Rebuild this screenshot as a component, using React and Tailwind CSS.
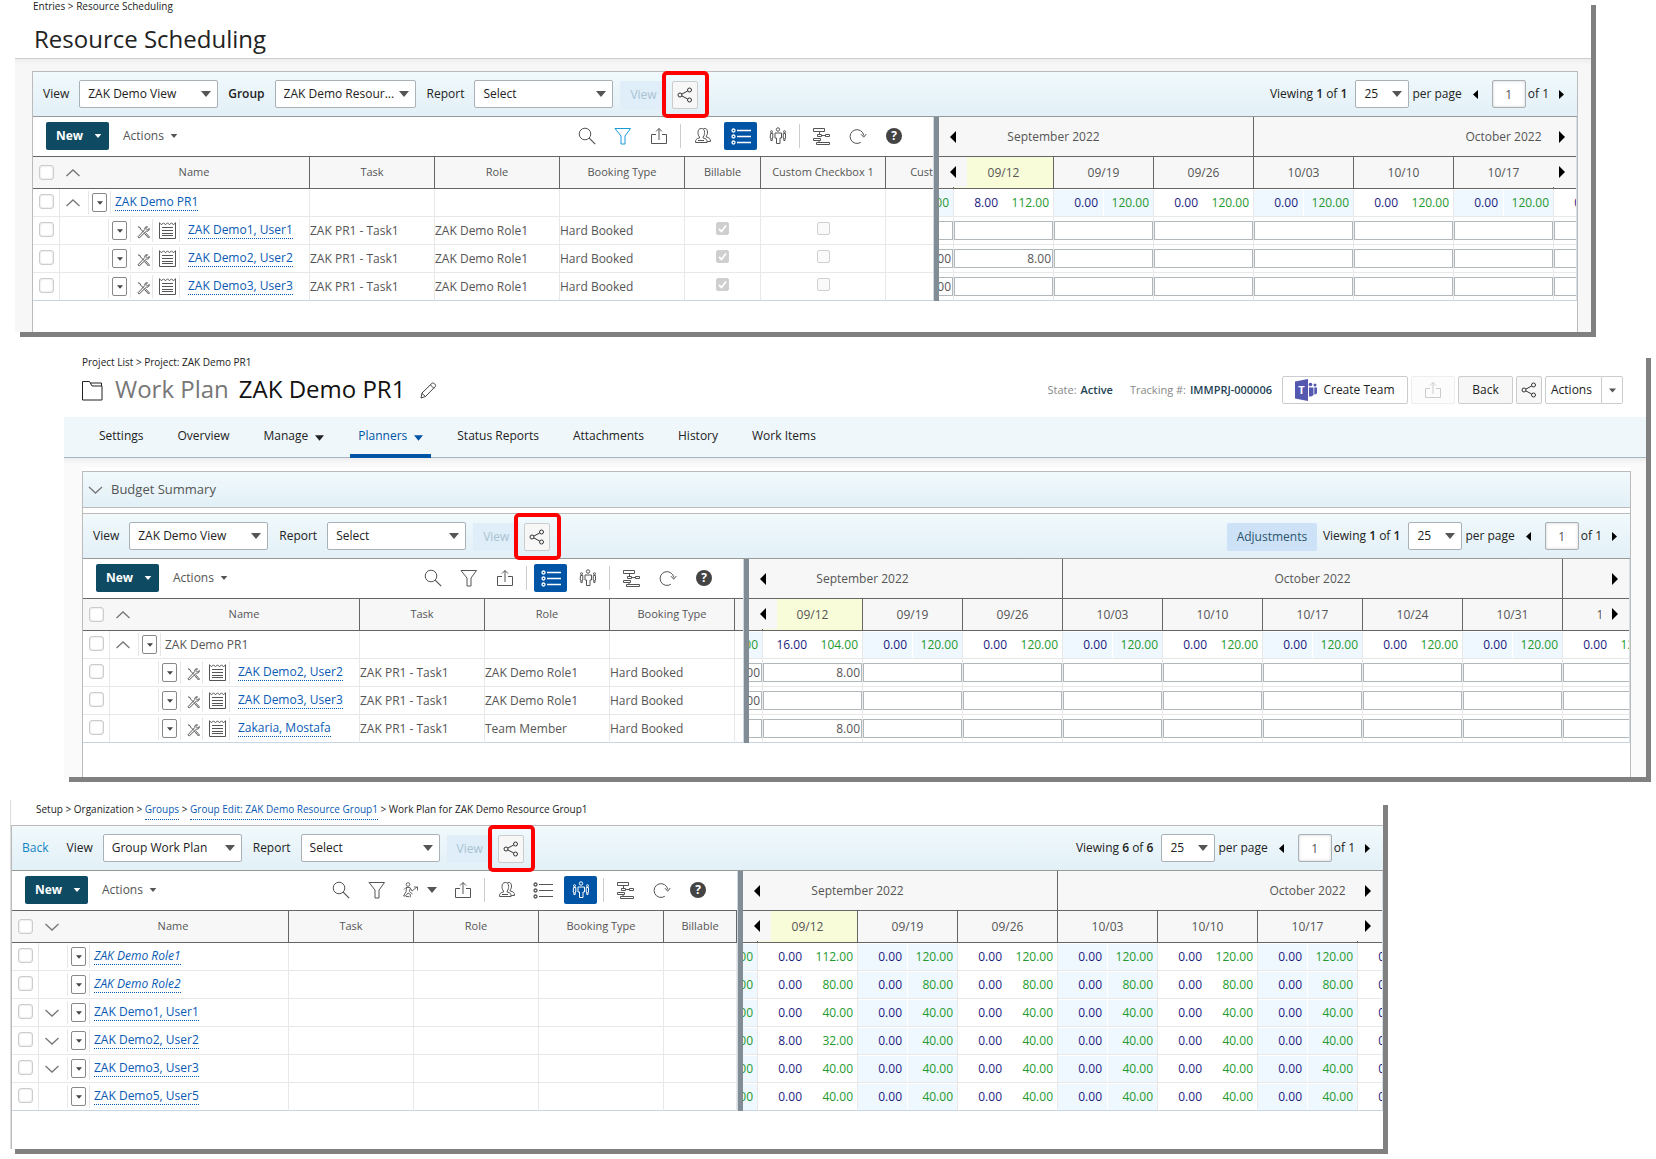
import React from "react";

const FONT = "font-['Open_Sans','Noto_Sans',sans-serif]";

/* ---------- icons ---------- */

function Caret({ className = "w-2.5 h-1.5 text-[#555]" }) {
  return (
    <svg viewBox="0 0 10 6" className={className} fill="currentColor" aria-hidden="true">
      <path d="M0 0H10L5 6Z" />
    </svg>
  );
}

function Arrow({ left = false, className = "w-[6px] h-[12px]" }) {
  return (
    <svg viewBox="0 0 6 12" className={className} fill="#000" preserveAspectRatio="none" aria-hidden="true">
      {left ? <path d="M6 0V12L0 6Z" /> : <path d="M0 0V12L6 6Z" />}
    </svg>
  );
}

function Chevron({ up = false, className = "w-[14px] h-[8px]" }) {
  return (
    <svg viewBox="0 0 14 8" className={className} fill="none" stroke="#777" strokeWidth="1.3" aria-hidden="true">
      {up ? <path d="M.5 7 7 1l6.5 6" /> : <path d="M.5 1 7 7l6.5-6" />}
    </svg>
  );
}

function Icon({ children, className = "size-[18px] text-[#555]", box = 18 }) {
  return (
    <svg viewBox={`0 0 ${box} ${box}`} className={className} fill="none" stroke="currentColor" strokeWidth="1" aria-hidden="true">
      {children}
    </svg>
  );
}

const SearchIcon = () => (
  <Icon>
    <circle cx="7" cy="7" r="5.8" />
    <path d="m11.2 11.2 6 6" strokeWidth="1.2" />
  </Icon>
);
const FilterIcon = ({ active }) => (
  <Icon className={active ? "size-[18px] text-[#1a9ad6]" : "size-[18px] text-[#555]"}>
    <path d="M1 1.5H16.5L11 9v8H7V9Z" />
  </Icon>
);
const ExportIcon = ({ className }) => (
  <Icon className={className}>
    <path d="M6 7.5H1.5V16.500H16.500V7.500H12M9 13V1.500M6 4.500l3-3 3 3" />
  </Icon>
);
const UsersIcon = () => (
  <Icon>
    <path d="M1.500 15.500c0-3 1-4 4-4.500v-1C4.200 8.500 4 7 4 5.500 4 2.800 5.300 1.500 7.300 1.500s3.300 1.300 3.300 4c0 1.500-.2 3-1.500 4.500v1c3 .5 4 1.500 4 4.500Z" />
    <path d="M9.500 1.500c2.700-.6 4 1 4 3.500 0 1.500-.3 3-1.300 4v1c3 .5 4.300 1.500 4.300 4.500h-3.300M4 13.500h6" />
  </Icon>
);
const ListIcon = ({ active }) => (
  <svg viewBox="0 0 20 17" className={active ? "w-5 h-[17px] text-white" : "w-5 h-[17px] text-[#555]"} fill="none" stroke="currentColor" aria-hidden="true">
    <circle cx="2.500" cy="2.500" r="1.500" strokeWidth="1.300" />
    <circle cx="2.500" cy="8.500" r="1.500" strokeWidth="1.300" />
    <circle cx="2.500" cy="14.500" r="1.500" strokeWidth="1.300" />
    <path d="M6 2.500H20M6 8.500H20M6 14.500H20" strokeWidth={active ? 1.500 : 1} />
  </svg>
);
const GroupIcon = ({ active }) => (
  <Icon className={active ? "size-[18px] text-white" : "size-[18px] text-[#555]"}>
    <circle cx="9" cy="2.500" r="1.700" />
    <path d="M6 6H12.500V11H11V16.500H7.500V11H6Z" />
    <circle cx="2.500" cy="4.700" r="1" />
    <circle cx="15.500" cy="4.700" r="1" />
    <path d="M1.500 6.500H3.800V11H3.200V13.500H1.900V11H1.200ZM14.300 6.500H16.500V11H16V13.500H14.800V11H14.200Z" />
  </Icon>
);
const GanttIcon = () => (
  <Icon>
    <path d="M.5 1.500H11.500V4.500H.5ZM4.500 7.500H8.500V9.500H4.500ZM12.500 7.500H16.500V9.500H12.500ZM.5 11.500H7.500V13.500H.5ZM3.500 15.500H16.500V17.500H3.500ZM6.500 4.500V7.500M8.500 8.500H12.500M6 13.500V15.500" />
  </Icon>
);
const RefreshIcon = () => (
  <Icon>
    <path d="M11.800 15.300A6.900 6.900 0 1 1 14.800 8.500M12 7.200l2.700 3L17.300 7" />
  </Icon>
);
const HelpIcon = () => (
  <span className="flex size-4 items-center justify-center rounded-full bg-[#444] text-[12px] leading-4 font-bold text-white">?</span>
);
const RunnerIcon = () => (
  <Icon className="size-4 text-[#666]" box={16}>
    <circle cx="5" cy="2.500" r="1.800" />
    <path d="M1 7.500 3 5.500h4l2 3.500 5-4M11 5h3.500v3.500M3.500 6 3 10l-2.500 4h2L5 11l2.500 1.500L7 15.500M7 6.500l-.5 3L9.500 12M3 14.500h3" />
  </Icon>
);
const ShareIcon = () => (
  <Icon className="size-4 text-[#333]" box={16}>
    <circle cx="12.500" cy="3" r="2" />
    <circle cx="3" cy="8" r="2" />
    <circle cx="12.500" cy="13" r="2" />
    <path d="M4.800 7.100 10.700 4M4.800 8.900 10.700 12" />
  </Icon>
);
const ToolsIcon = () => (
  <Icon className="size-[13px] text-[#555]" box={13}>
    <path d="M1 .8 3 1.500 3.500 3 7 6.500M7.500 7.500l4 4.500 1-1-4-4.300" />
    <path d="M12.300 2.500 10.500 4 9 2.500 10.500.8C8.500.3 7.300 2 7.800 3.500L1 10.800 2.200 12 9.300 5.200C11 5.500 12.700 4.300 12.300 2.500Z" />
  </Icon>
);
const NoteIcon = () => (
  <svg viewBox="0 0 17 17" className="size-[17px]" fill="none" stroke="#555" strokeWidth="1" aria-hidden="true">
    <path d="M.5 .5V16.500H16.500V.5" />
    <path d="M.5 .8l2 2 2-2 2 2 2-2 2 2 2-2 2 2 2-2M3 5.500H14M3 8.500H14M3 11.500H14M3 13.500H14" />
  </svg>
);
const FolderIcon = () => (
  <svg viewBox="0 0 21 21" className="size-[21px]" fill="none" stroke="#222" strokeWidth="1" aria-hidden="true">
    <path d="M.5 20V1.500H7.500l2.500 4.500H20V20Z" />
    <path d="M8.500 3H19.500V6" />
  </svg>
);
const PencilIcon = () => (
  <svg viewBox="0 0 17 17" className="size-[17px]" fill="none" stroke="#444" strokeWidth="1" aria-hidden="true">
    <path d="M1 16l1-5L12 1.300c1.500-1.200 4.500 1.700 3.300 3.200L5.500 14.500ZM10.500 3l3.500 3.500M2 11.500l3.500 3" />
  </svg>
);
const TeamsIcon = () => (
  <svg viewBox="0 0 23 22" className="w-[23px] h-[22px]" aria-hidden="true">
    <g fill="#5558af">
      <path d="M0 2.500 13 0V22L0 19.500Z" />
      <circle cx="15.500" cy="5.500" r="1.800" />
      <circle cx="20" cy="6" r="1.500" />
      <path d="M14 8.500h4.500v7.500q-2 2-4.500 1.500ZM19.300 8.500H22v5.500q-.8 1.500-2.700 1.500Z" />
    </g>
    <text x="6.500" y="15" textAnchor="middle" fill="#fff" fontSize="11" fontWeight="700" fontFamily="Open Sans">T</text>
  </svg>
);

/* ---------- controls ---------- */

function Select({ label, value, className = "w-[139px]" }) {
  return (
    <span className={`relative flex ${className}`}>
      <select
        aria-label={label}
        defaultValue={value}
        className="h-7 w-full appearance-none rounded-xs border border-[#a9b1b7] bg-white pl-2 text-[12px] text-[#222]"
      >
        <option>{value}</option>
      </select>
      <span className="pointer-events-none absolute top-[11px] right-[7px]">
        <Caret />
      </span>
    </span>
  );
}

function ShareButton({ className = "w-[26px]" }) {
  return (
    <button aria-label="Share" className={`flex h-7 items-center justify-center rounded-xs border border-[#ccc] bg-[#f7f7f7] ${className}`}>
      <ShareIcon />
    </button>
  );
}

function Pager({ count, prefix }) {
  return (
    <div className="ml-auto flex items-center text-[12px] text-[#222]">
      {prefix}
      <span>
        Viewing <b className="font-semibold">{count}</b> of <b className="font-semibold">{count}</b>
      </span>
      <Select label="Rows per page" value="25" className="ml-2 w-[54px]" />
      <span className="ml-[3px]">per page</span>
      <button aria-label="Previous page" className="ml-[11px]">
        <Arrow left className="h-[9px] w-[5px]" />
      </button>
      <input
        aria-label="Page"
        defaultValue="1"
        className="ml-3.5 h-7 w-[34px] rounded-xs border border-[#a9b1b7] bg-white text-center text-[#555] shadow-[inset_0_0_3px_#ccc]"
      />
      <span className="ml-0.5">of 1</span>
      <button aria-label="Next page" className="ml-2.5">
        <Arrow className="h-[9px] w-[5px]" />
      </button>
    </div>
  );
}

function ViewBar({ back, view, group, children }) {
  return (
    <div className="flex h-[45px] items-center border-b border-[#999] bg-linear-to-b from-[#f1f9fc] to-[#e2f0f7] pr-[13px] pl-2.5 text-[12px] text-[#222]">
      {back && (
        <a href="#back" className="mr-[18px] text-[#1484c4]">
          Back
        </a>
      )}
      <span className="mr-2.5">View</span>
      <Select label="View" value={view} />
      {group && (
        <>
          <span className="mx-2.5 font-semibold">Group</span>
          <Select label="Group" value={group} className="w-[141px]" />
        </>
      )}
      <span className="mr-2.5 ml-[11px]">Report</span>
      <Select label="Report" value="Select" />
      <button disabled className="mt-0.5 ml-[7px] h-7 bg-[#dfeef8] px-2.5 text-[#a9c3d3]">
        View
      </button>
      <span className="relative mt-0.5 ml-[5px]">
        <ShareButton />
        <span className="pointer-events-none absolute -top-2.5 -left-2.5 size-[47px] rounded-[5px] border-4 border-[#f00]" />
      </span>
      {children}
    </div>
  );
}

const TOOLS = {
  search: ["Search", <SearchIcon />],
  filter: ["Filter", <FilterIcon />],
  filterOn: ["Filter", <FilterIcon active />],
  export: ["Export", <ExportIcon />],
  users: ["Users", <UsersIcon />],
  list: ["List view", <ListIcon />],
  listOn: ["List view", <ListIcon active />],
  group: ["Group view", <GroupIcon />],
  groupOn: ["Group view", <GroupIcon active />],
  gantt: ["Gantt", <GanttIcon />],
  refresh: ["Refresh", <RefreshIcon />],
  help: ["Help", <HelpIcon />],
};

function Tool({ name }) {
  if (name === "|") return <span className="mr-1 ml-[3px] h-6 w-px self-center bg-[#ccc]" />;
  if (name === "runner")
    return (
      <button aria-label="Assign" className="flex h-7 w-[50px] items-center justify-center gap-2">
        <RunnerIcon />
        <Caret />
      </button>
    );
  const [label, icon] = TOOLS[name];
  const pressed = name === "listOn" || name === "groupOn";
  return (
    <button
      aria-label={label}
      className={`flex h-7 items-center justify-center ${pressed ? "mx-[3px] w-[33px] rounded-xs bg-[#0054a6]" : "w-9"}`}
    >
      {icon}
    </button>
  );
}

function ActionBar({ tools }) {
  return (
    <div className="flex h-10 items-center border-b border-[#666] bg-white pr-[21px] pb-px pl-[13px]">
      <button className="flex h-7 w-[63px] items-center justify-between rounded-xs bg-[#0e4a61] pr-[7px] pl-2.5 text-[12px] font-bold text-white">
        New
        <Caret className="h-1 w-2 text-white" />
      </button>
      <button className="ml-3.5 flex items-center gap-1.5 text-[12px] text-[#555]">
        Actions
        <Caret className="h-1 w-2 text-[#555]" />
      </button>
      <div className="ml-auto flex items-center">
        {tools.map((t, i) => (
          <Tool key={i} name={t} />
        ))}
      </div>
    </div>
  );
}

function RowCheck({ label }) {
  return (
    <input
      type="checkbox"
      aria-label={label}
      className="size-[15px] appearance-none rounded-[3px] border border-[#ccc] bg-white shadow-[inset_0_0_2px_#ccc]"
    />
  );
}

function CellCheck({ checked, label }) {
  return (
    <span className="relative mx-auto mb-1 block size-[13px]">
      <input
        type="checkbox"
        disabled
        defaultChecked={checked}
        aria-label={label}
        className="block size-[13px] appearance-none rounded-xs border border-[#d0d0d0] bg-[#fafafa] checked:bg-[#cfcfcf]"
      />
      {checked && (
        <svg viewBox="0 0 13 13" className="pointer-events-none absolute inset-0 size-[13px]" fill="none" stroke="#fff" strokeWidth="1.800" aria-hidden="true">
          <path d="M3 7l2.500 2.500L10 3.500" />
        </svg>
      )}
    </span>
  );
}

/* ---------- resource table (left) ---------- */

function Slot({ className, children }) {
  return <span className={`flex h-[23px] shrink-0 items-center justify-center border-r border-[#e6e6e6] ${className}`}>{children}</span>;
}

function NameCell({ row }) {
  return (
    <div className="flex h-[27px] items-center">
      <span className="flex w-[27px] shrink-0 items-center justify-center self-stretch border-r border-[#e6e6e6] pb-0.5">
        <RowCheck label={`Select ${row.name}`} />
      </span>
      <Slot className={row.child ? "w-[49px]" : "w-[29px] pr-[3px]"}>
        {row.open !== undefined && (
          <button aria-label="Toggle">
            <Chevron up={row.open} />
          </button>
        )}
      </Slot>
      <Slot className="w-[22px]">
        <button aria-label="Row menu" className="flex h-[19px] w-[15px] items-center justify-center rounded-xs border border-[#888] bg-white">
          <Caret className="h-[4px] w-[6px] text-[#444]" />
        </button>
      </Slot>
      {row.child && (
        <>
          <Slot className="w-[22px] pt-1 pl-[3px]">
            <ToolsIcon />
          </Slot>
          <Slot className="w-[27px] pb-px pl-[3px]">
            <NoteIcon />
          </Slot>
        </>
      )}
      {row.plain ? (
        <span className="ml-1">{row.name}</span>
      ) : (
        <a href="#row" className={`border-b border-dotted border-[#0a5ab4] leading-4 text-[#0a5ab4] ${row.child ? "ml-2" : "ml-1"} ${row.italic ? "italic" : ""}`}>
          {row.name}
        </a>
      )}
    </div>
  );
}

const td = "h-7 border-r border-b border-[#e8e8e8] p-0";

function ResourceTable({ columns, rows, open }) {
  return (
    <table className="w-full table-fixed border-separate border-spacing-0 text-[12px] text-[#555]">
      <colgroup>
        <col className="w-[277px]" />
        {columns.map((c) => (
          <col key={c.key} className={c.width} />
        ))}
      </colgroup>
      <thead>
        <tr className="bg-[#f7f7f7] text-[11px]">
          <th className="h-8 border-r border-b border-[#666] p-0 font-medium">
            <div className="flex items-center">
              <span className="flex w-[27px] justify-center pr-px">
                <RowCheck label="Select all" />
              </span>
              <button aria-label="Toggle all" className="flex w-[29px] justify-center pr-1">
                <Chevron up={open} />
              </button>
              <span className="flex-1 pr-2.5 text-center">Name</span>
            </div>
          </th>
          {columns.map((c) => (
            <th key={c.key} className={`h-8 border-b border-[#666] p-0 font-medium whitespace-nowrap ${c.last ? "text-right" : "border-r"}`}>
              {c.label}
            </th>
          ))}
        </tr>
      </thead>
      <tbody>
        {rows.map((row, r) => {
          const end = r === rows.length - 1 ? "border-b-[#c8d4e0]" : "";
          return (
            <tr key={row.name}>
              <td className={`${td} ${end}`}>
                <NameCell row={row} />
              </td>
              {columns.map((c) => (
                <td key={c.key} className={`${td} ${end} ${c.last ? "border-r-0" : ""} whitespace-nowrap`}>
                  {c.check && row.child ? <CellCheck checked={c.check === "on"} label={c.label} /> : row[c.key]}
                </td>
              ))}
            </tr>
          );
        })}
      </tbody>
    </table>
  );
}

/* ---------- schedule table (right) ---------- */

const WEEKS = ["09/05", "09/12", "09/19", "09/26", "10/03", "10/10", "10/17", "10/24", "10/31", "11/07"];

function TotalsCell({ values, shaded }) {
  const tone = shaded ? "bg-[#eff7ff]" : "";
  return (
    <div className="grid h-[27px] grid-cols-2 gap-px pt-px text-right leading-[26px]">
      <span className={`pr-[5px] text-[#1a1a80] ${tone}`}>{values[0]}</span>
      <span className={`pr-1 text-[#229a2e] ${tone}`}>{values[1]}</span>
    </div>
  );
}

function Pan({ left, className }) {
  return (
    <button
      aria-label={left ? "Earlier" : "Later"}
      className={`absolute flex w-7 items-center justify-center bg-[#f7f7f7] ${left ? "left-0" : "right-0"} ${className}`}
    >
      <Arrow left={left} />
    </button>
  );
}

/* `last` is the index of the week that the right edge of the pane cuts. */
function Schedule({ rows, last, lastWide, shift = "-ml-[85px]", edge = "border-r" }) {
  const totalsFor = (row, i) => {
    const [a, b] = i === 1 ? row.current : row.totals;
    return [i === 0 || i > last ? "" : a, i > last || (i === last && !lastWide) ? "" : b];
  };
  return (
    <div className={`relative min-w-0 flex-1 overflow-hidden bg-white ${edge} border-[#d5dfe8]`}>
      <table className={`w-[1000px] table-fixed border-separate border-spacing-0 text-[12px] text-[#555] ${shift}`}>
        <thead className="bg-[#f7f7f7]">
          <tr>
            <th colSpan={4} className="h-10 border-r border-b border-[#666] p-0 font-medium">September 2022</th>
            <th colSpan={5} className="h-10 border-r border-b border-[#666] p-0 font-medium">October 2022</th>
            <th className="h-10 border-b border-[#666] p-0" />
          </tr>
          <tr>
            {WEEKS.map((w, i) => (
              <th key={w} className={`h-8 border-r border-b border-[#666] p-0 font-medium ${w === "09/12" ? "bg-[#f9fcd9]" : ""}`}>
                {i > 0 && (i < last || lastWide) ? w : ""}
              </th>
            ))}
          </tr>
        </thead>
        <tbody>
          {rows.map((row, r) => (
            <tr key={r}>
              {WEEKS.map((w, i) => (
                <td key={w} className={`${td} ${r === rows.length - 1 ? "border-b-[#c8d4e0]" : ""}`}>
                  {row.totals ? (
                    <TotalsCell values={totalsFor(row, i)} shaded={i % 2 === 0} />
                  ) : (
                    i <= last && (
                      <input
                        aria-label={`Hours ${w}`}
                        defaultValue={row.hours[i] ?? ""}
                        className="block h-[19px] w-full border border-[#b0b8bc] bg-white pr-px text-right"
                      />
                    )
                  )}
                </td>
              ))}
            </tr>
          ))}
        </tbody>
      </table>
      <Pan left className="top-0 h-[39px]" />
      <Pan left className="top-10 h-[30px]" />
      <Pan className="top-0 h-[39px]" />
      <Pan className="top-10 h-[30px]" />
    </div>
  );
}

function Planner({ leftWidth, tools, columns, resources, open, schedule, last = 7, lastWide = false, shift, edge }) {
  return (
    <div className="flex bg-white">
      <div className={`shrink-0 ${leftWidth}`}>
        <ActionBar tools={tools} />
        <ResourceTable columns={columns} rows={resources} open={open} />
      </div>
      <div className="w-1.5 shrink-0 border-l border-[#cdd8e0] bg-[#828c95]" />
      <Schedule rows={schedule} last={last} lastWide={lastWide} shift={shift} edge={edge} />
    </div>
  );
}

/* ---------- data ---------- */

const base = [
  { label: "Task", key: "task", width: "w-[125px]" },
  { label: "Role", key: "role", width: "w-[125px]" },
  { label: "Booking Type", key: "booking", width: "w-[125px]" },
];
const child = (name, role = "ZAK Demo Role1") => ({ name, child: true, task: "ZAK PR1 - Task1", role, booking: "Hard Booked" });
const totals = (a, b, rest = "120.00") => ({ current: [a, b], totals: ["0.00", rest] });

const columns1 = [
  ...base,
  { label: "Billable", key: "billable", width: "w-[76px]", check: "on" },
  { label: "Custom Checkbox 1", key: "cc1", width: "w-[125px]", check: "off" },
  { label: "Cust", key: "cc2", last: true },
];
const columns2 = [...base, { label: "", key: "rest", last: true }];
const columns3 = [...base, { label: "Billable", key: "billable" }];

/* ---------- screens ---------- */

const panel = "bg-white shadow-[5px_5px_0_#808080]";

function ResourceScheduling() {
  return (
    <section className={`mr-[65px] ml-[15px] ${panel}`}>
      <header className="h-[58px] pl-[18px]">
        <p className="text-[10px] leading-3 text-[#222]">Entries &gt; Resource Scheduling</p>
        <h1 className="mt-[11px] ml-px text-[24px] leading-8 text-[#222]">Resource Scheduling</h1>
      </header>
      <div className="border-t border-[#ccc] bg-linear-to-b from-[#eee] to-[#f7f7f7] to-[6px] pt-3 pr-[13px] pl-[17px]">
        <div className="border border-b-0 border-[#bbb] bg-white pb-[31px]">
          <ViewBar view="ZAK Demo View" group="ZAK Demo Resour...">
            <Pager count="1" />
          </ViewBar>
          <Planner
            leftWidth="w-[900px]"
            tools={["search", "filterOn", "export", "|", "users", "listOn", "group", "|", "gantt", "refresh", "help"]}
            columns={columns1}
            open
            resources={[{ name: "ZAK Demo PR1", open: true }, child("ZAK Demo1, User1"), child("ZAK Demo2, User2"), child("ZAK Demo3, User3")]}
            schedule={[totals("8.00", "112.00"), { hours: [] }, { hours: ["8.00", "8.00"] }, { hours: ["8.00"] }]}
          />
        </div>
      </div>
    </section>
  );
}

const TABS = [
  ["Settings"],
  ["Overview"],
  ["Manage", true],
  ["Planners", true],
  ["Status Reports"],
  ["Attachments"],
  ["History"],
  ["Work Items"],
];

function WorkPlan() {
  const button = "flex h-7 items-center rounded-xs border border-[#ccc] text-[12px] text-[#222]";
  return (
    <section className={`mt-[21px] mr-2.5 ml-16 ${panel}`}>
      <header className="h-16 pr-[23px] pl-[18px]">
        <p className="pt-0.5 text-[10px] leading-[14px] text-[#222]">Project List &gt; Project: ZAK Demo PR1</p>
        <div className="mt-[7px] flex h-7 items-center">
          <FolderIcon />
          <h1 className="ml-3 pb-0.5 text-[24px] leading-7 text-[#111]">
            <span className="mr-2.5 text-[#777]">Work Plan</span>
            ZAK Demo PR1
          </h1>
          <button aria-label="Edit name" className="ml-[15px]">
            <PencilIcon />
          </button>
          <div className="ml-auto flex items-center text-[11px] text-[#888]">
            State:<b className="mr-[17px] ml-1 font-semibold text-[#1d4354]">Active</b>
            Tracking #:<b className="mr-2.5 ml-1 font-semibold text-[#1d4354]">IMMPRJ-000006</b>
            <button className={`${button} mr-[3px] w-[126px] justify-center gap-[5px] bg-white`}>
              <TeamsIcon />
              Create Team
            </button>
            <button disabled aria-label="Export" className={`${button} mr-[3px] w-11 justify-center border-[#eee] bg-[#fcfcfc]`}>
              <ExportIcon className="size-[18px] text-[#ccc]" />
            </button>
            <button className={`${button} mr-[3px] w-[55px] justify-center bg-[#f7f7f7]`}>Back</button>
            <ShareButton className="mr-[3px] w-[26px]" />
            <button className={`${button} w-[57px] rounded-r-none bg-white pl-[5px]`}>Actions</button>
            <button aria-label="More actions" className={`${button} w-[21px] justify-center rounded-l-none border-l-0 bg-white`}>
              <Caret className="h-[5px] w-[7px] text-[#555]" />
            </button>
          </div>
        </div>
      </header>
      <nav className="flex h-[41px] gap-[18px] border-b border-[#a5b6c2] bg-[#eff7fb] pl-[27px] text-[12px] text-[#222]">
        {TABS.map(([name, menu]) => (
          <a
            key={name}
            href="#tab"
            className={`flex h-[41px] items-center gap-[7px] border-b-4 px-2 ${name === "Planners" ? "border-[#0054a6] font-medium text-[#0054a6]" : "border-transparent"}`}
          >
            {name}
            {menu && <Caret className="mt-1 h-[6px] w-[9px]" />}
          </a>
        ))}
      </nav>
      <div className="bg-linear-to-b from-[#eee] to-[#fafafa] to-[6px] pt-[9px] pr-[15px] pl-[18px]">
        <div className="bg-white pt-1">
          <button className="flex h-[37px] w-full items-center gap-2 border border-[#bbb] bg-linear-to-b from-[#f1f9fc] to-[#e2f0f7] pl-[5px] text-[13px] text-[#555]">
            <Chevron className="h-2 w-[15px]" />
            Budget Summary
          </button>
          <div className="h-[5px] border-x border-[#bbb]" />
          <div className="border border-b-0 border-[#bbb] pb-[34px]">
            <ViewBar view="ZAK Demo View">
              <Pager
                count="1"
                prefix={<button className="mt-0.5 mr-1.5 h-7 w-[90px] rounded-xs bg-[#cde2f6] text-[12px] text-[#2b556e]">Adjustments</button>}
              />
            </ViewBar>
            <Planner
              leftWidth="w-[660px]"
              tools={["search", "filter", "export", "|", "listOn", "group", "|", "gantt", "refresh", "help"]}
              columns={columns2}
              open
              last={9}
              lastWide
              shift="-ml-[86px]"
              resources={[
                { name: "ZAK Demo PR1", open: true, plain: true },
                child("ZAK Demo2, User2"),
                child("ZAK Demo3, User3"),
                child("Zakaria, Mostafa", "Team Member"),
              ]}
              schedule={[totals("16.00", "104.00"), { hours: ["8.00", "8.00"] }, { hours: ["8.00"] }, { hours: [null, "8.00"] }]}
            />
          </div>
        </div>
      </div>
    </section>
  );
}

function GroupWorkPlan() {
  const crumb = "border-b border-dotted border-[#0a5ab4] pb-[3px] text-[#0a5ab4]";
  return (
    <section className={`mt-[23px] mr-[273px] ml-2.5 border-l border-[#ddd] ${panel}`}>
      <p className="h-[25px] pt-0.5 pl-[25px] text-[10px] leading-[14px] text-[#222]">
        Setup &gt; Organization &gt; <a href="#groups" className={crumb}>Groups</a> &gt;{" "}
        <a href="#group" className={crumb}>Group Edit: ZAK Demo Resource Group1</a> &gt; Work Plan for ZAK Demo Resource Group1
      </p>
      <div className="border-t border-l border-[#bbb] pb-[38px]">
        <ViewBar back view="Group Work Plan">
          <Pager count="6" />
        </ViewBar>
        <Planner
          leftWidth="w-[725px]"
          tools={["search", "filter", "runner", "export", "|", "users", "list", "groupOn", "|", "gantt", "refresh", "help"]}
          columns={columns3}
          open={false}
          resources={[
            { name: "ZAK Demo Role1", italic: true },
            { name: "ZAK Demo Role2", italic: true },
            { name: "ZAK Demo1, User1", open: false },
            { name: "ZAK Demo2, User2", open: false },
            { name: "ZAK Demo3, User3", open: false },
            { name: "ZAK Demo5, User5" },
          ]}
          schedule={[
            totals("0.00", "112.00"),
            totals("0.00", "80.00", "80.00"),
            totals("0.00", "40.00", "40.00"),
            totals("8.00", "32.00", "40.00"),
            totals("0.00", "40.00", "40.00"),
            totals("0.00", "40.00", "40.00"),
          ]}
        />
      </div>
    </section>
  );
}

export default function App() {
  return (
    <main className={`bg-white pb-2 ${FONT}`}>
      <ResourceScheduling />
      <WorkPlan />
      <GroupWorkPlan />
    </main>
  );
}
